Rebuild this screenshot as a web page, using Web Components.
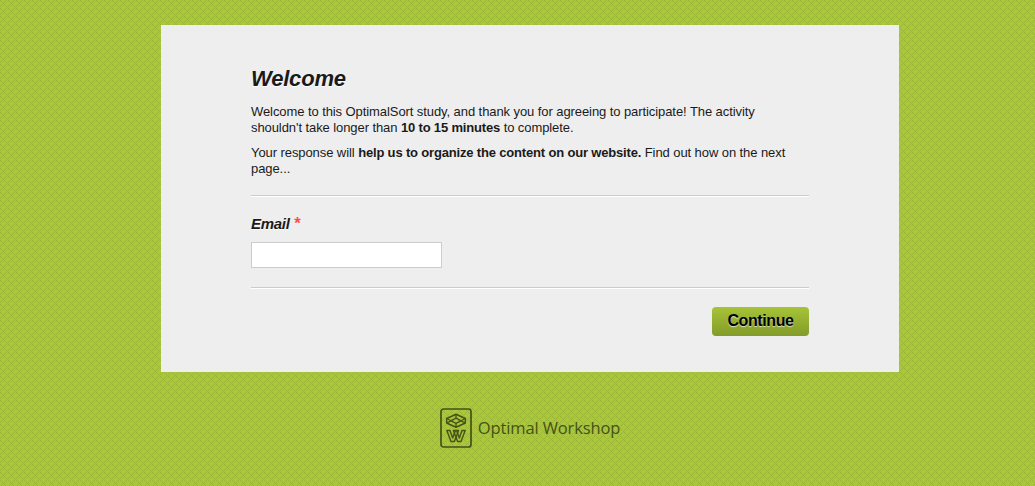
<!DOCTYPE html>
<html lang="en">
  <head>
    <meta charset="UTF-8" />
    <meta name="viewport" content="width=device-width, initial-scale=1.0" />
    <title>Welcome</title>
    <style>
      html {
        min-height: 100%;
        background: #a9c739 url("data:image/svg+xml,%3Csvg xmlns='http://www.w3.org/2000/svg' width='8' height='8' shape-rendering='crispEdges'%3E%3Cpath fill='%239bb638' d='M0 6h1v1h-1zM1 5h1v1h-1zM2 4h1v1h-1zM3 3h1v1h-1zM4 2h1v1h-1zM5 1h1v1h-1zM6 0h1v1h-1zM7 7h1v1h-1zM0 0h1v1h-1zM1 1h1v1h-1zM2 2h1v1h-1zM4 4h1v1h-1zM5 5h1v1h-1zM6 6h1v1h-1z'/%3E%3C/svg%3E");
      }
      body {
        margin: 0;
        font-family: "Liberation Sans", Helvetica, Arial, sans-serif;
        color: #1a1a1a;
      }
    </style>
  </head>
  <body>
    <study-page>
      <study-card>
        <study-intro heading="Welcome">
          <p>Welcome to this OptimalSort study, and thank you for agreeing to participate! The activity<br />shouldn't take longer than <b>10 to 15 minutes</b> to complete.</p>
          <p>Your response will <b>help us to organize the content on our website.</b> Find out how on the next<br />page...</p>
        </study-intro>
        <form-field>Email</form-field>
        <continue-button>Continue</continue-button>
      </study-card>
      <brand-logo slot="footer">Optimal Workshop</brand-logo>
    </study-page>
  </body>
  <script>
    class StudyPage extends HTMLElement {
      connectedCallback() {
        const shadowRoot = this.attachShadow({ mode: "open" });
        shadowRoot.innerHTML = `
          <style>
            :host {
              display: block;
              padding: 25px 136px 0 161px;
            }
            footer {
              display: flex;
              justify-content: center;
              padding-top: 36px;
            }
          </style>
          <main><slot></slot></main>
          <footer><slot name="footer"></slot></footer>
        `;
      }
    }
    window.customElements.define("study-page", StudyPage);

    class StudyCard extends HTMLElement {
      connectedCallback() {
        const shadowRoot = this.attachShadow({ mode: "open" });
        shadowRoot.innerHTML = `
          <style>
            :host {
              display: block;
              box-sizing: border-box;
              height: 347px;
              padding: 41px 90px 0;
              background: #eee;
            }
          </style>
          <slot></slot>
        `;
      }
    }
    window.customElements.define("study-card", StudyCard);

    class StudyIntro extends HTMLElement {
      connectedCallback() {
        const shadowRoot = this.attachShadow({ mode: "open" });
        shadowRoot.innerHTML = `
          <style>
            :host {
              display: block;
              height: 129px;
              border-bottom: 1px solid #ccc;
              box-shadow: 0 1px #fff;
              font-size: 13px;
              line-height: 16px;
              letter-spacing: -0.08px;
              white-space: nowrap;
            }
            h1 {
              margin: 0 0 12px;
              font-size: 22px;
              font-style: italic;
              line-height: 26px;
              letter-spacing: -0.2px;
              text-shadow: 0 1px #fff;
            }
            ::slotted(p) {
              margin: 0 0 9px;
            }
          </style>
          <h1>${this.getAttribute("heading")}</h1>
          <slot></slot>
        `;
        this.querySelectorAll("b").forEach((b) => (b.style.letterSpacing = "-0.17px"));
      }
    }
    window.customElements.define("study-intro", StudyIntro);

    class FormField extends HTMLElement {
      connectedCallback() {
        const shadowRoot = this.attachShadow({ mode: "open" });
        shadowRoot.innerHTML = `
          <style>
            :host {
              display: block;
              height: 73px;
              padding-top: 18px;
              border-bottom: 1px solid #ccc;
              box-shadow: 0 1px #fff;
            }
            label {
              display: block;
              margin-bottom: 8px;
              font-size: 15px;
              font-style: italic;
              font-weight: bold;
              line-height: 20px;
              letter-spacing: -0.3px;
              text-shadow: 0 1px #fff;
            }
            span {
              color: #ff4b4b;
              font-size: 17px;
              line-height: 1;
            }
            input {
              display: block;
              box-sizing: border-box;
              width: 191px;
              height: 26px;
              border: 1px solid #ccc;
              background: #fff;
            }
          </style>
          <label for="field"><slot></slot> <span>*</span></label>
          <input id="field" type="text" />
        `;
      }
    }
    window.customElements.define("form-field", FormField);

    class ContinueButton extends HTMLElement {
      connectedCallback() {
        const shadowRoot = this.attachShadow({ mode: "open" });
        shadowRoot.innerHTML = `
          <style>
            :host {
              display: flex;
              justify-content: flex-end;
              padding-top: 19px;
            }
            button {
              width: 97px;
              height: 29px;
              padding: 0 0 2px;
              border: 0;
              border-radius: 4px;
              background: linear-gradient(#a6c436, #839b2b);
              color: #000;
              font: bold 16px/27px "Liberation Sans", Helvetica, Arial, sans-serif;
              letter-spacing: -0.4px;
              text-shadow: 0 1px 1px rgba(255, 255, 255, 0.7);
            }
          </style>
          <button type="button"><slot></slot></button>
        `;
      }
    }
    window.customElements.define("continue-button", ContinueButton);

    class BrandLogo extends HTMLElement {
      connectedCallback() {
        const shadowRoot = this.attachShadow({ mode: "open" });
        shadowRoot.innerHTML = `
          <style>
            :host {
              display: flex;
              align-items: center;
              gap: 6px;
              color: #455217;
              font: 16.5px/40px "Open Sans", "Noto Sans", sans-serif;
              letter-spacing: -0.12px;
              white-space: nowrap;
            }
            svg {
              display: block;
            }
          </style>
          <svg width="32" height="40" viewBox="0 0 32 40" fill="none" stroke="currentColor" stroke-linejoin="round">
            <rect x="1" y="1" width="30" height="38" rx="2.5" stroke-width="1.7" />
            <!-- cube -->
            <path stroke-width="1.5" d="M16 6.300 25.300 10.500v4.500L16 19.200 6.700 15v-4.500z" />
            <path stroke-width="1.300" d="M16 10.200 21 12.800 16 15.400 11 12.800zM16 6.300v3.900M16 15.400v3.800M6.700 10.500 11 12.800 6.700 15M25.300 10.500 21 12.800 25.300 15" />
            <!-- two overlapping chevrons -->
            <path stroke-width="1.400" d="M6.800 22.500h3.200l2.700 7.500 2.700-7.500h3.200l-4.200 11h-3.400z" />
            <path stroke-width="1.400" d="M13.400 22.500h3.200l2.700 7.500 2.700-7.500h3.200l-4.200 11h-3.400z" />
          </svg>
          <slot></slot>
        `;
      }
    }
    window.customElements.define("brand-logo", BrandLogo);
  </script>
</html>
